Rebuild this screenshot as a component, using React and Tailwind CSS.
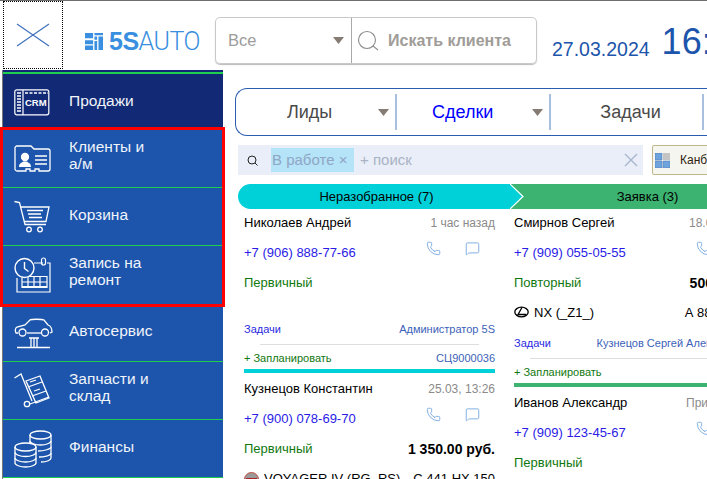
import React from "react";
import { Phone, MessageSquare } from "lucide-react";

const CrmIcon = () => (
  <svg width="36" height="27" viewBox="0 0 36 27" fill="none" stroke="white" strokeWidth="1.2">
    <rect x="0.8" y="0.8" width="34" height="25" rx="2" />
    <path d="M9 1v25" />
    <path d="M3 4h4M3 7h4M3 10h4M3 13h4M3 16h4M3 19h4M3 22h4" strokeWidth="1.6" />
    <path d="M11 4h23" strokeDasharray="3 1.5" strokeWidth="1.4" />
    <text x="11" y="17" fill="white" stroke="none" fontSize="9.5" fontWeight="700" fontFamily="Liberation Sans, sans-serif">CRM</text>
  </svg>
);

const ClientIcon = () => (
  <svg width="37" height="29" viewBox="0 0 37 29" fill="none" stroke="white" strokeWidth="1.3">
    <path d="M1 4a2 2 0 0 1 2-2h14l3 3h14a2 2 0 0 1 2 2v18a2 2 0 0 1-2 2H25v-2h-4v2H16v-2h-4v2H3a2 2 0 0 1-2-2z" />
    <circle cx="11" cy="13" r="3.5" fill="white" />
    <path d="M5 23c0-4 3-4.500 4.500-5.500h3C14 18.500 17 19 17 23z" fill="white" stroke="none" />
    <path d="M21 12h12M21 16h12M21 20h12" />
  </svg>
);

const CartIcon = () => (
  <svg width="36" height="33" viewBox="0 0 36 33" fill="none" stroke="white" strokeWidth="1.3">
    <path d="M0.500 1.500l5 1 5.500 22h21" />
    <path d="M6.500 7H35l-3 14.500H10" />
    <path d="M13 10.500h16M14 14h13M15 17.500h13" />
    <circle cx="15" cy="29.500" r="2.300" />
    <circle cx="26" cy="29.500" r="2.300" />
  </svg>
);

const CalendarIcon = () => (
  <svg width="37" height="36" viewBox="0 0 37 36" fill="none" stroke="white" strokeWidth="1.2">
    <path d="M20 6h9M33 6h3v29H3V21" />
    <rect x="27.500" y="1" width="4" height="7" rx="2" />
    <circle cx="10.500" cy="11" r="9.500" strokeWidth="1.4" />
    <path d="M10.500 5v6.500l4 3" strokeWidth="1.4" />
    <path d="M8 25h25M8 29.500h25M15 19.500h18v11H8v-11M14 20v11M20 20v11M26 20v11" />
  </svg>
);

const CarIcon = () => (
  <svg width="39" height="32" viewBox="0 0 39 32" fill="none" stroke="white" strokeWidth="1.3">
    <path d="M4 16H2c-1-2-1-5 1-6l8-2 5-5c1-1 12-1 14 0l4 5c3 1 4 3 4 7l-2 1" />
    <path d="M13 16h14" />
    <circle cx="8.500" cy="15.500" r="3.500" />
    <circle cx="31" cy="15.500" r="3.500" />
    <path d="M15 21h10M17 21v9M23 21v9M20 21v9M3 30.500h33" />
  </svg>
);

const TrolleyIcon = () => (
  <svg width="36" height="36" viewBox="0 0 36 36" fill="none" stroke="white" strokeWidth="1.3">
    <path d="M0.500 5L7 1l11 27" />
    <circle cx="13" cy="31" r="2.700" />
    <path d="M16 31l19-7" />
    <path d="M12 8l14-5 9 22-13 5z" />
    <path d="M14 14l14-5" />
    <path d="M18 23l14-5" />
    <path d="M16 9l6-2M20 18l6-2" />
  </svg>
);

const CoinsIcon = () => (
  <svg width="38" height="38" viewBox="0 0 38 38" fill="none" stroke="white" strokeWidth="1.3">
    <ellipse cx="26.500" cy="5" rx="10.500" ry="4" />
    <path d="M16 5v9M37 5v23c0 2-4 4-10 4" />
    <path d="M16 11c0 2 5 4 10.500 4S37 13 37 11M24 21c6 0 13-2 13-4M25 27c4 0 12-1 12-4" />
    <ellipse cx="11.500" cy="17" rx="10.500" ry="4" fill="#1c55ab" />
    <path d="M1 17v16c0 2 5 4 10.500 4S22 35 22 33V17" />
    <path d="M1 22.500c0 2 5 4 10.500 4S22 24.500 22 22.500M1 28c0 2 5 4 10.500 4S22 30 22 28" />
  </svg>
);

const SideItem = ({ icon, label, lines, last }) => (
  <div className={`flex h-[58px] items-center bg-[#1c55ab] ${last ? "" : "border-b border-[#1fd04f]"}`}>
    <div className="w-[66px] pl-[11px] shrink-0">{icon}</div>
    <div className={`w-[90px] text-[15.5px] leading-[17px] text-[#f0f4fb] ${lines === 2 ? "pb-[8px]" : "pb-[4px]"}`}>{label}</div>
  </div>
);

const Caret = () => (
  <svg width="11" height="7" viewBox="0 0 11 7" className="shrink-0"><path d="M0 0h11L5.500 7z" fill="#857b72" /></svg>
);

const LexusLogo = () => (
  <svg width="15" height="12" viewBox="0 0 15 12" fill="none" stroke="black" strokeWidth="1.3" className="-mt-[3px]">
    <ellipse cx="7.500" cy="6" rx="6.700" ry="4.800" />
    <path d="M8 1.500L4 8.500h8" />
  </svg>
);

const DealCard = ({ name, time, timeClass, phone, kind, sum, car, plate, logo, spacer, owner, code, bar }) => (
  <div className="w-[251px]">
    <div className="flex h-[30px] items-center justify-between pt-[2px]">
      <span className="text-[13px] text-black">{name}</span>
      <span className={`text-[12px] text-[#8a8a8a] whitespace-nowrap ${timeClass || ""}`}>{time}</span>
    </div>
    <div className="flex h-[30px] items-center pt-[2px]">
      <span className="text-[13px] text-[#2a1be6]">{phone}</span>
      <div className="ml-auto mr-[15px] -mt-[9px] flex gap-[24px] text-[#5b96d8]">
        <Phone size={15} strokeWidth={1.2} />
        <MessageSquare size={15} strokeWidth={1.2} />
      </div>
    </div>
    <div className="flex h-[30px] items-center justify-between pt-[2px]">
      <span className="text-[13px] text-[#11780f]">{kind}</span>
      {sum && <span className="text-[14px] font-bold text-black">{sum}</span>}
    </div>
    {car ? (
      <div className="flex h-[30px] items-center justify-between pt-[2px]">
        <span className="flex items-center gap-[5px] text-[13px] text-black">{logo}{car}</span>
        <span className="text-[13px] text-black">{plate}</span>
      </div>
    ) : (
      <div className="h-[24px]" />
    )}
    {spacer && <div className="h-[8px]" />}
    {owner !== undefined && (
      <>
        <div className="flex h-[16px] items-center justify-between text-[11px]">
          <span className="text-[#2a2ae0]">Задачи</span>
          <span className="text-[#3c62b8] whitespace-nowrap">{owner}</span>
        </div>
        <div className="mx-[16px] mt-[7px] h-px bg-[#dedede]" />
        <div className="mt-[5px] flex h-[16px] items-center justify-between text-[11px]">
          <span className="text-[#11780f]">+ Запланировать</span>
          <span className="text-[#3c62b8]">{code}</span>
        </div>
        <div className={`mt-[3px] h-[4px] ${bar}`} />
      </>
    )}
  </div>
);

export default function App() {
  return (
    <div className="flex h-[479px] w-[707px] flex-col overflow-hidden border-t border-[#6e6e6e] bg-white font-['Liberation_Sans',sans-serif]">
      <div className="flex h-[69px] shrink-0 items-start pl-[3px]">
        <div className="flex h-[68px] w-[60px] shrink-0 items-center justify-center border border-dotted border-black">
          <svg width="34" height="24" viewBox="0 0 34 24" fill="none" stroke="#3f72bd" strokeWidth="1.2">
            <path d="M1 1l32 22M33 1L1 23" />
          </svg>
        </div>
        <div className="ml-[22px] mt-[28px] flex w-[115px] shrink-0 items-center gap-[6px]">
          <svg width="18" height="19" viewBox="0 0 20 19" fill="#3a8fe0" className="shrink-0">
            <path d="M0 0h9v6H0zM10.500 0H20v2.500H10.500zM0 8h9v4.500H0zM10.500 4h3v3.500h-3zM15 4h5v15h-5zM0 14h9v5H0zM10.500 9h3v10h-3z" />
          </svg>
          <span className="text-[25px] leading-none tracking-[-0.5px] text-[#3a8fe0] whitespace-nowrap">
            <span className="font-bold">5S</span>
            <span className="font-['Roboto',sans-serif] font-light">AUTO</span>
          </span>
        </div>
        <div className="ml-[15px] mt-[16px] flex h-[47px] w-[322px] shrink-0 rounded-[5px] border border-[#c9c9c9] shadow-[0_1px_1px_#bbb]">
          <div className="flex w-[136px] items-center border-r border-[#a9a9a9] pl-[12px] pr-[7px]">
            <span className="text-[16.500px] text-[#9c9c9c]">Все</span>
            <span className="ml-auto"><Caret /></span>
          </div>
          <div className="flex flex-1 items-center pl-[5px]">
            <svg width="22" height="22" viewBox="0 0 22 22" fill="none" stroke="#8c8c8c" strokeWidth="1.1">
              <circle cx="10" cy="10" r="8.500" />
              <path d="M16 16l5 4" />
            </svg>
            <span className="ml-[9px] text-[16px] font-bold text-[#a09c98]">Искать клиента</span>
          </div>
        </div>
        <div className="ml-[15px] mt-[36px] shrink-0 text-[19.500px] leading-[24px] text-[#1c55ab]">27.03.2024</div>
        <div className="ml-[12px] mt-[19px] shrink-0 text-[36px] leading-[44px] text-[#1c55ab]">16:35</div>
      </div>

      <div className="flex min-h-0 flex-1">
        <div className="w-[3px] shrink-0">
          <div className="ml-[2px] h-full w-px bg-[#777]" />
        </div>
        <div className="w-[220px] shrink-0">
          <div className="bg-[#122a75] pt-[2px]">
            <div className="flex h-[58px] items-center border-t-2 border-[#1fd04f]">
              <div className="w-[66px] pl-[11px] shrink-0"><CrmIcon /></div>
              <div className="pb-[3px] text-[15.500px] text-[#f0f4fb]">Продажи</div>
            </div>
          </div>
          <div className="relative mr-px bg-[#1c55ab] outline-3 outline-[#ff0000]">
            <SideItem icon={<ClientIcon />} label="Клиенты и а/м" lines={2} />
            <SideItem icon={<CartIcon />} label="Корзина" />
            <SideItem icon={<CalendarIcon />} label="Запись на ремонт" lines={2} last />
          </div>
          <SideItem icon={<CarIcon />} label="Автосервис" />
          <SideItem icon={<TrolleyIcon />} label="Запчасти и склад" lines={2} />
          <SideItem icon={<CoinsIcon />} label="Финансы" />
        </div>

        <div className="min-w-0 flex-1 pl-[12px] pt-[18px]">
          <div className="flex h-[48px] w-[480px] items-center rounded-l-[12px] border-y border-l border-[#2a5db0]">
            <div className="flex h-[36px] w-[161px] shrink-0 items-center border-r-2 border-[#a9bfe0] pl-[51px] pr-[6px]">
              <span className="text-[18px] text-[#4a4a4a]">Лиды</span>
              <span className="ml-auto"><Caret /></span>
            </div>
            <div className="flex h-[36px] w-[154px] shrink-0 items-center border-r-2 border-[#a9bfe0] pl-[35px] pr-[6px]">
              <span className="text-[18px] text-[#0000ff]">Сделки</span>
              <span className="ml-auto"><Caret /></span>
            </div>
            <div className="flex h-[36px] w-[153px] shrink-0 items-center justify-center border-r-2 border-[#a9bfe0] pl-[8px]">
              <span className="text-[18px] text-[#4a4a4a]">Задачи</span>
            </div>
          </div>

          <div className="mt-[9px] flex h-[30px] w-[560px] pl-[3px]">
            <div className="flex w-[405px] shrink-0 items-center bg-[#e9eef8] pl-[9px] pr-[5px]">
              <svg width="11" height="11" viewBox="0 0 11 11" fill="none" stroke="#222" strokeWidth="1">
                <circle cx="5" cy="5" r="4" />
                <path d="M8 8l2.500 2.500" />
              </svg>
              <span className="ml-[13px] flex h-[24px] w-[83px] items-center bg-[#b5e3f8] pl-[1px] text-[15px] whitespace-nowrap text-[#8fa6c4]">В работе ×</span>
              <span className="ml-[6px] text-[15px] text-[#a9b3c4]">+ поиск</span>
              <svg className="ml-auto" width="14" height="14" viewBox="0 0 14 14" fill="none" stroke="#a7b5cf" strokeWidth="1.300">
                <path d="M1 1l12 12M13 1L1 13" />
              </svg>
            </div>
            <div className="ml-[9px] flex w-[90px] shrink-0 items-center gap-[10px] rounded-[2px] border border-[#c2b68a] bg-[#f6f6f0] pl-[2px]">
              <svg width="15" height="15" viewBox="0 0 15 15">
                <path d="M0 0h7v7H0zM0 8h7v7H0zM8 8h7v7H8z" fill="#6fa3dc" stroke="#4a7bb5" strokeWidth="0.5" />
                <path d="M8 0h7v7H8z" fill="#c4c4c4" />
              </svg>
              <span className="text-[12px] text-[#2e2410]">Канбан</span>
            </div>
          </div>

          <div className="mt-[9px] ml-[3px] flex h-[25px] w-[533px] text-[13px] text-black">
            <div className="flex w-[272px] shrink-0 items-center justify-center rounded-l-full bg-[#00d0d8] pl-[5px]">Неразобранное (7)</div>
            <svg width="14" height="25" viewBox="0 0 14 25" className="shrink-0">
              <rect width="14" height="25" fill="#3cb371" />
              <path d="M0 0l13 12.500L0 25z" fill="#00d0d8" />
              <path d="M0 0l13 12.500L0 25" fill="none" stroke="white" strokeWidth="1.200" />
            </svg>
            <div className="flex w-[247px] shrink-0 items-center justify-center bg-[#3cb371]">Заявка (3)</div>
          </div>

          <div className="-mt-[2px] ml-[9px] flex w-[530px] gap-[19px]">
            <div className="w-[251px] shrink-0">
              <DealCard name="Николаев Андрей" time="1 час назад" phone="+7 (906) 888-77-66" kind="Первичный" owner="Администратор 5S" code="СЦ9000036" bar="bg-[#00d0d8]" />
              <DealCard name="Кузнецов Константин" time="25.03, 13:26" phone="+7 (900) 078-69-70" kind="Первичный" sum="1 350.00 руб."
                car="VOYAGER IV (RG_RS)" plate="С 441 НХ 150"
                logo={<svg width="15" height="15" viewBox="0 0 15 15"><circle cx="7.500" cy="7.500" r="7" fill="#9a9a9a" stroke="#c05040" /><rect x="2" y="6" width="11" height="3" fill="#b02020" /></svg>} />
            </div>
            <div className="w-[251px] shrink-0">
              <DealCard name="Смирнов Сергей" time="18.03, 11:05" timeClass="w-[76px]" phone="+7 (909) 055-05-55" kind="Повторный" sum="500.00 руб."
                car="NX (_Z1_)" plate="А 888 АА 750" logo={<LexusLogo />} spacer owner="Кузнецов Сергей Александрович" bar="bg-[#3cb371]" />
              <DealCard name="Иванов Александр" time="Принят сегодня" timeClass="w-[79px]" phone="+7 (909) 123-45-67" kind="Первичный" />
            </div>
          </div>
        </div>
      </div>
    </div>
  );
}
